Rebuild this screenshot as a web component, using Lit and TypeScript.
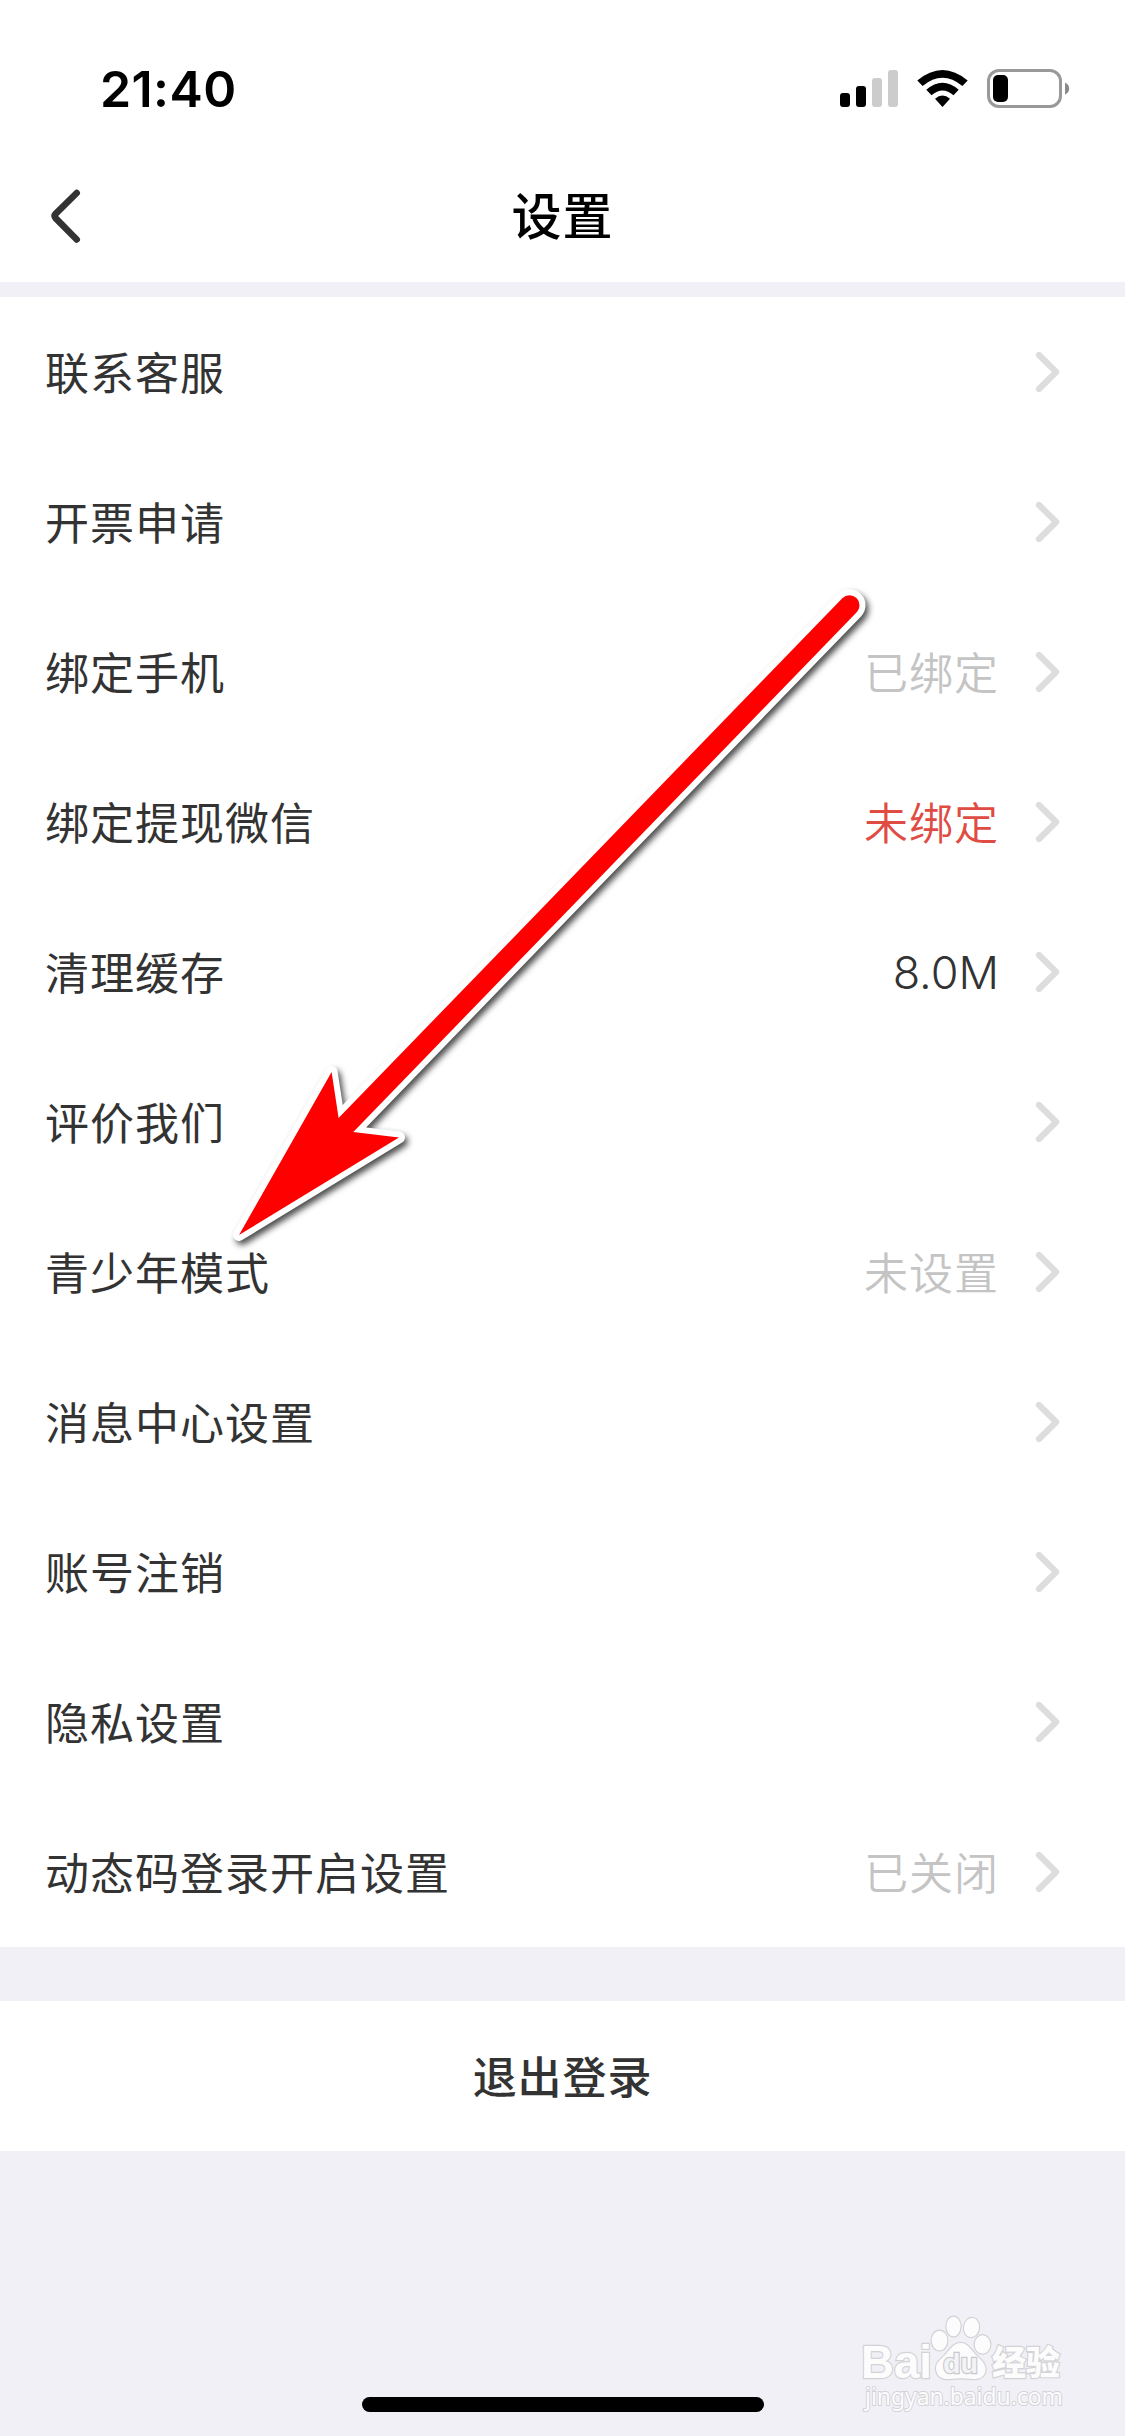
import { LitElement, html, css, svg, nothing } from "lit";
import { customElement, property } from "lit/decorators.js";

type Tone = "muted" | "alert" | "plain";
interface Item {
  label: string;
  value?: string;
  tone?: Tone;
}

const ITEMS: Item[] = [
  { label: "联系客服" },
  { label: "开票申请" },
  { label: "绑定手机", value: "已绑定", tone: "muted" },
  { label: "绑定提现微信", value: "未绑定", tone: "alert" },
  { label: "清理缓存", value: "8.0M", tone: "plain" },
  { label: "评价我们" },
  { label: "青少年模式", value: "未设置", tone: "muted" },
  { label: "消息中心设置" },
  { label: "账号注销" },
  { label: "隐私设置" },
  { label: "动态码登录开启设置", value: "已关闭", tone: "muted" },
];

@customElement("status-bar")
class StatusBar extends LitElement {
  static styles = css`
    :host {
      display: flex;
      justify-content: space-between;
      height: 135px;
      padding: 0 55px 0 100px;
      box-sizing: border-box;
    }
    .time {
      font: 600 50px/60px Inter, sans-serif;
      color: #000;
      padding-top: 59px;
      letter-spacing: 0.4px;
    }
    .icons {
      display: block;
      width: 230px;
      height: 40px;
      padding-top: 69px;
    }
  `;
  render() {
    return html`
      <span class="time">21:40</span>
      <svg class="icons" viewBox="840 69 230 40" aria-hidden="true">
        <rect x="840" y="93" width="10" height="14" rx="3" />
        <rect x="856" y="86" width="10" height="21" rx="3" />
        <rect x="872" y="78" width="10" height="29" rx="3" fill="#ccc" />
        <rect x="888" y="70" width="10" height="37" rx="3" fill="#ccc" />
        <path d="M917.3 80.5 Q942.5 59.5 967.7 80.5 L962.4 86 Q942.5 69.5 922.6 86Z" />
        <path d="M926.3 89.8 Q942.5 75.8 958.7 89.8 L953.5 95.2 Q942.5 85.6 931.5 95.2Z" />
        <path d="M935 98.8 Q942.5 92.2 950 98.8 L942.5 107Z" />
        <rect x="988.5" y="70.5" width="72" height="36" rx="10.5" fill="none" stroke="#999" stroke-width="3" />
        <rect x="993" y="75" width="15" height="27" rx="5" />
        <path d="M1065 82.5 Q1069.2 84.5 1069.2 88.5 T1065 94.5Z" fill="#8a8a8a" />
      </svg>
    `;
  }
}

@customElement("nav-bar")
class NavBar extends LitElement {
  @property() heading = "";
  static styles = css`
    :host {
      display: grid;
      grid-template-columns: 1fr auto 1fr;
      align-items: start;
      height: 147px;
      padding: 0 48px;
      box-sizing: border-box;
    }
    .back {
      display: block;
      width: 36px;
      height: 60px;
      margin-top: 51px;
    }
    .heading {
      margin: 42px 0 0;
      font: 500 50px/72px "Noto Sans CJK SC", sans-serif;
      letter-spacing: 1px;
      color: #000;
    }
  `;
  render() {
    return html`
      <svg class="back" viewBox="48 186 36 60" role="img" aria-label="返回">
        <path
          d="M76.7 193 L55.8 213.6 Q53.6 216 55.8 218.4 L76.7 239.5"
          fill="none"
          stroke="#333"
          stroke-width="6.6"
          stroke-linecap="round"
          stroke-linejoin="round"
        />
      </svg>
      <h1 class="heading">${this.heading}</h1>
    `;
  }
}

@customElement("setting-row")
class SettingRow extends LitElement {
  @property() label = "";
  @property() value = "";
  @property() tone: Tone = "plain";
  static styles = css`
    :host {
      display: flex;
      align-items: center;
      height: 150px;
      padding: 0 63px 0 45px;
      box-sizing: border-box;
      font: 400 44px/66px "Noto Sans CJK SC", sans-serif;
      letter-spacing: 1px;
      color: #333;
    }
    .label {
      flex: 1;
      padding-bottom: 2px;
    }
    .value {
      margin-right: 35px;
      padding-bottom: 2px;
      font-weight: 350;
    }
    .plain {
      font: 350 45px/66px Inter, sans-serif;
      letter-spacing: 0;
      padding-bottom: 0;
      padding-top: 1px;
    }
    .muted {
      color: #c4c4c4;
    }
    .alert {
      color: #e04b43;
    }
    .chevron {
      display: block;
      width: 28px;
      height: 44px;
    }
  `;
  render() {
    return html`
      <span class="label">${this.label}</span>
      ${this.value ? html`<span class="value ${this.tone}">${this.value}</span>` : nothing}
      <svg class="chevron" viewBox="1034 650 28 44" aria-hidden="true">
        <path
          d="M1039 655 L1056.2 672 L1039 689"
          fill="none"
          stroke="#ddd"
          stroke-width="6.2"
          stroke-linecap="round"
          stroke-linejoin="round"
        />
      </svg>
    `;
  }
}

@customElement("pointer-arrow")
class PointerArrow extends LitElement {
  static styles = css`
    :host {
      display: block;
      pointer-events: none;
    }
    .arrow {
      display: block;
      width: 660px;
      height: 680px;
      filter: drop-shadow(3px 4px 3px rgba(0, 0, 0, 0.7));
    }
  `;
  render() {
    const outline =
      "M239 1235 L331.6 1072 L338.6 1118 L842.3 598.3 A10 10 0 0 1 856.7 612.3 L353.3 1132 L399 1137.5 Z";
    return html`
      <svg class="arrow" viewBox="220 580 660 680" aria-hidden="true">
        ${svg`
          <path d=${outline} fill="#fff" stroke="#fff" stroke-width="12" stroke-linejoin="round" />
          <path d=${outline} fill="#f00" />
        `}
      </svg>
    `;
  }
}

@customElement("site-mark")
class SiteMark extends LitElement {
  static styles = css`
    :host {
      display: block;
    }
    .mark {
      display: block;
      width: 220px;
      height: 110px;
    }
    .shape {
      fill: #fcfcfd;
      stroke: #d3d3d6;
      stroke-width: 2.4;
      paint-order: stroke;
    }
    .latin {
      font-family: "Liberation Sans", sans-serif;
      font-weight: 700;
    }
    .han {
      font-family: "Noto Sans CJK SC", sans-serif;
      font-weight: 900;
    }
    .site {
      font-family: "Noto Sans", sans-serif;
      font-weight: 400;
      stroke-width: 2;
    }
    .inner {
      fill: #f3f3f6;
      stroke: #cacace;
      stroke-width: 2.4;
      paint-order: stroke;
    }
  `;
  render() {
    return html`
      <svg class="mark" viewBox="856 2310 220 110">
        <text class="shape latin" x="861" y="2378" font-size="46" textLength="71" lengthAdjust="spacingAndGlyphs">Bai</text>
        <ellipse class="shape" cx="939.5" cy="2340.5" rx="7.8" ry="9.8" />
        <ellipse class="shape" cx="953.5" cy="2326.5" rx="7" ry="9.8" />
        <ellipse class="shape" cx="971.5" cy="2327.5" rx="7.5" ry="9.5" transform="rotate(8 971.5 2327.5)" />
        <ellipse class="shape" cx="982.5" cy="2344.5" rx="7.8" ry="9.2" />
        <path
          class="shape"
          d="M960.5 2343 C968 2343 971 2350 976 2355 C982 2361 986 2364 985.5 2370 C985 2377 979 2379.500 972 2379 C965 2378 957 2378 950 2379 C942 2379.500 937 2377 936 2369 C935.500 2363 940 2360 945 2355 C950 2350 953 2343 960.500 2343Z"
        />
        <text class="inner latin" x="943" y="2373" font-size="28" textLength="35" lengthAdjust="spacingAndGlyphs">du</text>
        <text class="shape han" x="992" y="2375" font-size="34" textLength="68" lengthAdjust="spacingAndGlyphs">经验</text>
        <text class="shape site" x="865" y="2405" font-size="24" textLength="198" lengthAdjust="spacingAndGlyphs">jingyan.baidu.com</text>
      </svg>
    `;
  }
}

@customElement("app-root")
class AppRoot extends LitElement {
  static styles = css`
    :host {
      display: block;
      position: relative;
      width: 1125px;
      height: 2436px;
      overflow: hidden;
      background: #f1f0f6;
    }
    .screen {
      display: flex;
      flex-direction: column;
      height: 100%;
    }
    .panel {
      background: #fff;
    }
    .list {
      margin: 15px 0 54px;
    }
    .logout {
      height: 150px;
      border: 0;
      padding: 0 0 2px;
      font: 500 44px/66px "Noto Sans CJK SC", sans-serif;
      letter-spacing: 0.9px;
      color: #333;
      background: #fff;
    }
    .home {
      width: 402px;
      height: 15px;
      border-radius: 8px;
      background: #000;
      margin: auto auto 24px;
    }
    .pointer {
      position: absolute;
      left: 220px;
      top: 580px;
    }
    .mark {
      position: absolute;
      left: 856px;
      top: 2310px;
    }
  `;
  render() {
    return html`
      <main class="screen">
        <header class="panel">
          <status-bar></status-bar>
          <nav-bar heading="设置"></nav-bar>
        </header>
        <section class="panel list">
          ${ITEMS.map(
            (item) => html`<setting-row
              .label=${item.label}
              .value=${item.value ?? ""}
              .tone=${item.tone ?? "plain"}
            ></setting-row>`,
          )}
        </section>
        <button class="logout">退出登录</button>
        <div class="home"></div>
      </main>
      <pointer-arrow class="pointer"></pointer-arrow>
      <site-mark class="mark"></site-mark>
    `;
  }
}
